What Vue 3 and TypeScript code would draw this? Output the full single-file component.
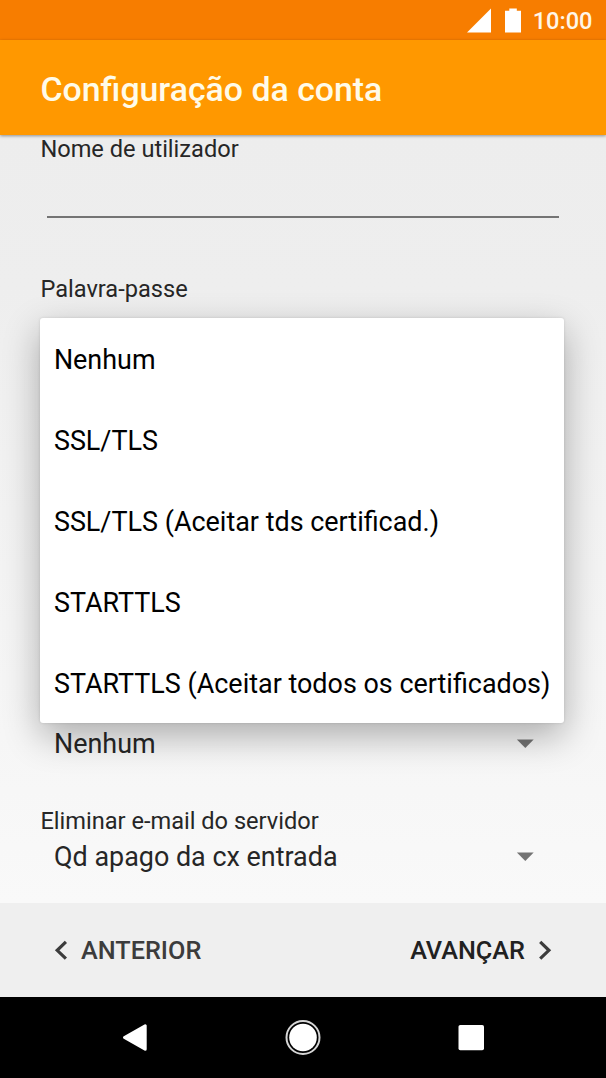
<script setup lang="ts">
const securityOptions: string[] = [
  'Nenhum',
  'SSL/TLS',
  'SSL/TLS (Aceitar tds certificad.)',
  'STARTTLS',
  'STARTTLS (Aceitar todos os certificados)',
]
</script>

<template>
  <div class="screen">
    <header class="status">
      <svg class="signal" width="24" height="25" viewBox="0 0 24 25"><path d="M0 24.5 24 0.5V24.5Z" fill="#fff" /></svg>
      <svg class="battery" width="16" height="25" viewBox="0 0 16 25"><path d="M4.3 0.5H11.8V2.7H16V24.5H0V2.7H4.3Z" fill="#fff" /></svg>
      <span class="clock">10:00</span>
    </header>
    <div class="appbar"><h1>Configuração da conta</h1></div>

    <main class="form">
      <label class="caption username">Nome de utilizador</label>
      <div class="input"></div>
      <label class="caption password">Palavra-passe</label>
      <div class="covered"></div>
      <div class="select">
        <span>Nenhum</span>
        <svg width="18" height="10" viewBox="0 0 18 10"><path d="M0.9 0.5H17.7L9.3 9Z" fill="#737373" /></svg>
      </div>
      <label class="caption removal">Eliminar e-mail do servidor</label>
      <div class="select last">
        <span>Qd apago da cx entrada</span>
        <svg width="18" height="10" viewBox="0 0 18 10"><path d="M0.9 0.5H17.7L9.3 9Z" fill="#737373" /></svg>
      </div>
      <ul class="popup">
        <li v-for="option in securityOptions" :key="option">{{ option }}</li>
      </ul>
    </main>

    <footer class="actions">
      <button class="prev" type="button">
        <svg width="14" height="20" viewBox="0 0 14 20"><path d="M11.9 1.9 3.2 10.3 11.9 18.7" fill="none" stroke="currentColor" stroke-width="3.2" /></svg>
        <span>ANTERIOR</span>
      </button>
      <button class="next" type="button">
        <span>AVANÇAR</span>
        <svg width="14" height="20" viewBox="0 0 14 20"><path d="M2.2 1.9 10.9 10.3 2.2 18.7" fill="none" stroke="#3c3c3c" stroke-width="3.2" /></svg>
      </button>
    </footer>
    <nav class="sysnav">
      <svg width="606" height="81" viewBox="0 0 606 81">
        <path d="M124.5 40.5 145.2 28.7V52.3Z" fill="#fff" stroke="#fff" stroke-width="3" stroke-linejoin="round" />
        <circle cx="303" cy="40.5" r="16.5" fill="none" stroke="#d6d6d6" stroke-width="2" />
        <circle cx="303" cy="40.5" r="13.8" fill="#fff" />
        <rect x="458.5" y="28" width="25.5" height="25.3" rx="1.8" fill="#fff" />
      </svg>
    </nav>
  </div>
</template>

<style>
body { margin: 0; }
</style>

<style scoped>
.screen {
  width: 606px;
  height: 1078px;
  display: flex;
  flex-direction: column;
  overflow: hidden;
  background: #fff;
  font-family: Roboto, "Liberation Sans", sans-serif;
}
.status {
  height: 40px;
  flex: none;
  box-sizing: border-box;
  padding: 0 13.5px 0 0;
  display: flex;
  align-items: center;
  justify-content: flex-end;
  background: #f77d00;
}
.battery { margin: 0 12px 0 14px; }
.clock {
  color: #fff6e8;
  font-size: 23.57px;
  font-weight: 500;
  line-height: 40px;
  padding-top: 2px;
}
.appbar {
  height: 94.6px;
  flex: none;
  position: relative;
  z-index: 1;
  background: #ff9800;
  padding-left: 40.5px;
  box-shadow: 0 1px 3px rgba(0, 0, 0, 0.4);
}
.appbar h1 {
  margin: 0;
  font-size: 33.83px;
  font-weight: 500;
  line-height: 99px;
  color: #fffbe9;
  white-space: nowrap;
}
.form {
  height: 769px;
  flex: none;
  margin-top: -0.6px;
  position: relative;
  display: flex;
  flex-direction: column;
  background: linear-gradient(#ededed, #eeeeee 20%, #f9f9f9);
  color: #262626;
}
.caption {
  display: block;
  flex: none;
  margin-left: 40.4px;
  font-size: 23.6px;
  line-height: 28px;
}
.username { padding-top: 1px; }
.input {
  height: 52.5px;
  flex: none;
  margin: 0 47px;
  border-bottom: 2px solid #747474;
}
.password { margin-top: 57px; }
.covered { height: 421.5px; flex: none; }
.select {
  height: 40px;
  flex: none;
  margin: 0 72px 0 54px;
  display: flex;
  align-items: center;
  justify-content: space-between;
  font-size: 26.93px;
}
.removal { margin-top: 43px; }
.last { margin-top: 2px; }
.popup {
  position: absolute;
  left: 40.4px;
  top: 184.4px;
  width: 523.4px;
  height: 404.2px;
  margin: 0;
  padding: 0;
  list-style: none;
  background: #fff;
  border-radius: 3px;
  box-shadow: 0 13px 36px rgba(0, 0, 0, 0.3), 0 0 3px rgba(0, 0, 0, 0.12);
}
.popup li {
  height: 80.9px;
  padding-left: 13.5px;
  font-size: 26.93px;
  line-height: 84.2px;
  color: #000;
  white-space: nowrap;
}
.actions {
  height: 94px;
  flex: none;
  box-sizing: border-box;
  padding: 0 54px;
  display: flex;
  align-items: center;
  justify-content: space-between;
  background: #efefef;
}
.actions button {
  display: flex;
  align-items: center;
  gap: 13px;
  padding: 0;
  border: 0;
  background: none;
  font: 500 25.25px/30px Roboto, sans-serif;
}
.actions span { padding-top: 2px; }
.actions .prev { color: #3c3c3c; }
.actions .next { color: #212121; }
.sysnav {
  height: 81px;
  flex: none;
  background: #000;
}
.sysnav svg { display: block; }
</style>
